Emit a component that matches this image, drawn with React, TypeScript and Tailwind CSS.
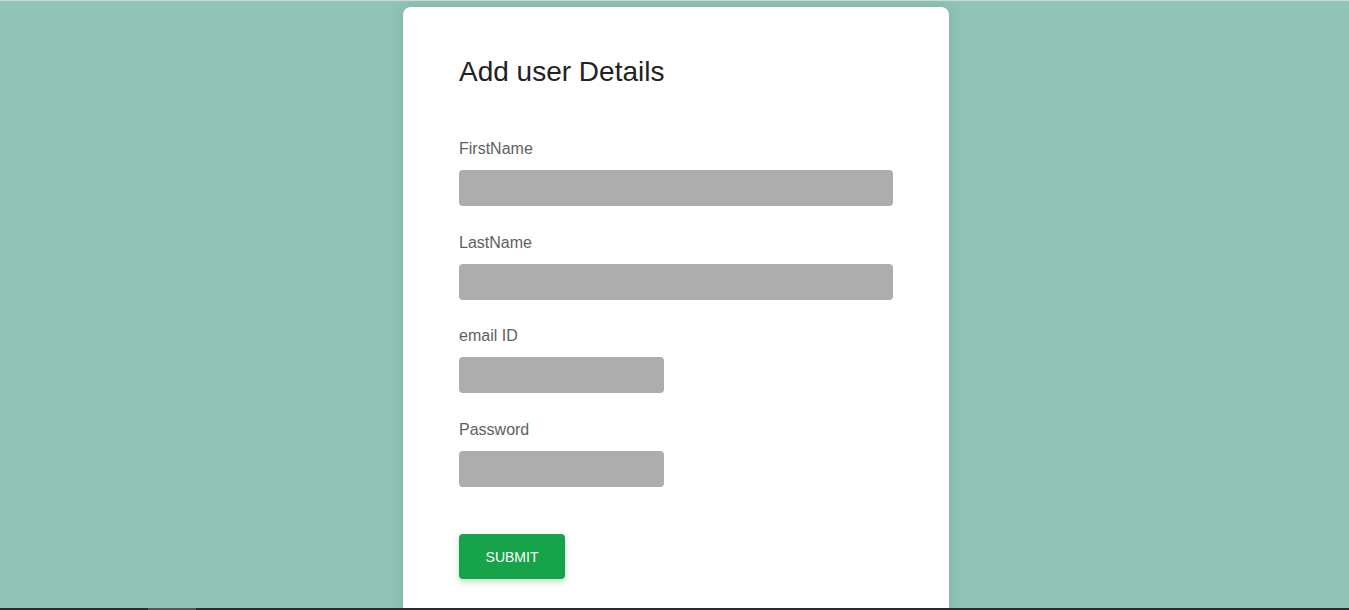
import React from "react";

const fields = [
  { label: "FirstName", wide: true },
  { label: "LastName", wide: true },
  { label: "email ID", wide: false },
  { label: "Password", wide: false },
];

export default function App() {
  return (
    <div
      className="h-[610px] w-full flex flex-col overflow-hidden bg-[#90c4b6]"
      style={{ fontFamily: '"Liberation Sans", Arial, sans-serif' }}
    >
      {/* top edge of the browser frame */}
      <div className="h-px bg-[#cfd6d3]" />

      <main className="flex-1 flex justify-center pl-[3px] overflow-hidden">
        <div className="w-[546px] h-[640px] shrink-0 mt-[6px] bg-white rounded-lg shadow-[0_0_14px_rgba(60,110,95,0.25)] px-[56px] pt-[49px]">
          <h1 className="text-[28px] leading-8 text-[#222]">Add user Details</h1>

          <form className="mt-[51px] flex flex-col gap-[26.5px]" onSubmit={(e) => e.preventDefault()}>
            {fields.map((f) => (
              <div key={f.label} className="flex flex-col">
                <label className="text-base leading-5 text-[#5f5f5f] mb-[11px]">{f.label}</label>
                <input
                  type={f.label === "Password" ? "password" : "text"}
                  className={
                    f.wide
                      ? "h-9 w-full rounded bg-[#adadad] outline-none px-3"
                      : "h-9 w-[205px] rounded bg-[#adadad] outline-none px-3"
                  }
                />
              </div>
            ))}

            <div className="pt-[21px]">
              <button
                type="submit"
                className="h-[45px] w-[106px] rounded bg-[#16a34a] text-white text-sm shadow-[0_3px_6px_rgba(22,163,74,0.3)]"
              >
                SUBMIT
              </button>
            </div>
          </form>
        </div>
      </main>

      {/* taskbar strip at the bottom */}
      <div className="h-[2px] flex bg-[#2b2c2d]">
        <div className="w-[148px]" />
        <div className="w-[48px] bg-[#555657]" />
      </div>
    </div>
  );
}
